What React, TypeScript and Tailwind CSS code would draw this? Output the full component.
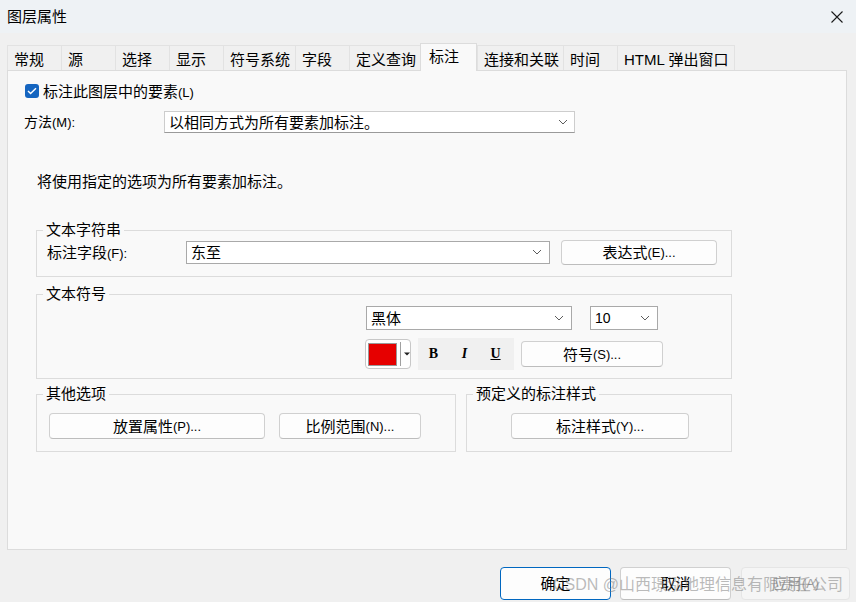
import React from "react";

const tabs = [
  { label: "常规", w: "w-[54px]" },
  { label: "源", w: "w-[54px]" },
  { label: "选择", w: "w-[54px]" },
  { label: "显示", w: "w-[54px]" },
  { label: "符号系统", w: "w-[72px]" },
  { label: "字段", w: "w-[54px]" },
  { label: "定义查询", w: "w-[71px]" },
  { label: "标注", w: "w-[57px]", active: true },
  { label: "连接和关联", w: "w-[86px]" },
  { label: "时间", w: "w-[54px]" },
  { label: "HTML 弹出窗口", w: "w-[118px]" },
];

function Chevron() {
  return (
    <svg width="10" height="6" viewBox="0 0 10 6" className="shrink-0">
      <path d="M1 1l4 4 4-4" fill="none" stroke="#5c5c5c" strokeWidth="1" />
    </svg>
  );
}

function Combo({ text, className }: { text: string; className: string }) {
  return (
    <div
      className={`flex items-center justify-between bg-white border border-[#a9a9a9] pl-[4px] pr-[7px] text-[15px] leading-none ${className}`}
    >
      <span>{text}</span>
      <Chevron />
    </div>
  );
}

function Btn({ text, mn, className }: { text: string; mn?: string; className: string }) {
  return (
    <div
      className={`flex items-center justify-center bg-[#fdfdfd] border border-[#d0d0d0] border-b-[#bdbdbd] rounded-[4px] text-[15px] leading-none ${className}`}
    >
      <span>{text}</span>
      {mn && <span className="text-[13px]">{mn}</span>}
    </div>
  );
}

function Legend({ text }: { text: string }) {
  return <legend className="ml-[6px] px-[3px] text-[15px] leading-[20px]">{text}</legend>;
}

export default function App() {
  return (
    <div className="relative w-[856px] h-[602px] overflow-hidden bg-[#f0f0f0] text-[#000] font-['Liberation_Sans','Noto_Sans_CJK_SC',sans-serif] flex flex-col">
      {/* Title bar */}
      <div className="h-[33px] shrink-0 bg-[#eef2f5] flex items-center justify-between pl-[7px] pr-[13px]">
        <span className="text-[15px] leading-none">图层属性</span>
        <svg width="12" height="12" viewBox="0 0 12 12">
          <path d="M0.5 0.5l11 11M11.5 0.5l-11 11" stroke="#1a1a1a" strokeWidth="1.1" />
        </svg>
      </div>

      {/* Tabs */}
      <div className="h-[37px] shrink-0 flex items-end pl-[7px]">
        {tabs.map((t, i) =>
          t.active ? (
            <div
              key={t.label}
              className={`${t.w} h-[28px] -mb-px relative z-10 bg-[#f9f9f9] border border-b-0 border-[#dcdcdc] pl-[8px] pt-[4px] text-[15px] leading-[18px]`}
            >
              {t.label}
            </div>
          ) : (
            <div
              key={t.label}
              className={`${t.w} h-[25px] bg-[#f0f0f0] border-t border-l border-[#e2e2e2] ${
                i === tabs.length - 1 ? "border-r" : ""
              } pl-[6px] pt-[5px] text-[15px] leading-[18px] whitespace-nowrap`}
            >
              {t.label}
            </div>
          )
        )}
      </div>

      {/* Panel */}
      <div className="ml-[7px] w-[840px] h-[480px] shrink-0 bg-[#f9f9f9] border border-[#dcdcdc] pl-[16px] pt-[10px]">
        <div className="h-[20px] flex items-center">
          <div className="ml-px w-[14px] h-[14px] rounded-[3px] bg-[#1565c0] flex items-center justify-center">
            <svg width="10" height="8" viewBox="0 0 10 8">
              <path d="M1 4l2.6 2.6L9 1.2" fill="none" stroke="#fff" strokeWidth="1.4" />
            </svg>
          </div>
          <span className="ml-[4px] text-[15px] leading-none">
            标注此图层中的要素<span className="text-[13px]">(L)</span>
          </span>
        </div>

        <div className="mt-[10px] h-[22px] flex items-center">
          <span className="w-[140px] text-[14px] leading-none">
            方法<span className="text-[13px]">(M):</span>
          </span>
          <div className="w-[411px] h-[22px] flex items-center justify-between bg-white border border-[#cdcdcd] border-b-[#9a9a9a] pl-[4px] pr-[6px] text-[15px] leading-none">
            <span>以相同方式为所有要素加标注。</span>
            <Chevron />
          </div>
        </div>

        <div className="mt-[39px] ml-[13px] h-[20px] text-[15px] leading-[20px]">将使用指定的选项为所有要素加标注。</div>

        {/* 文本字符串 */}
        <fieldset className="mt-[28px] ml-[12px] w-[696px] border border-[#dcdcdc] pb-[11px]">
          <Legend text="文本字符串" />
          <div className="-mt-px h-[26px] flex items-center pl-[10px]">
            <span className="w-[139px] text-[15px] leading-none">
              标注字段<span className="text-[13px]">(F):</span>
            </span>
            <Combo text="东至" className="w-[364px] h-[23px]" />
            <Btn text="表达式" mn="(E)..." className="ml-[11px] w-[156px] h-[25px]" />
          </div>
        </fieldset>

        {/* 文本符号 */}
        <fieldset className="mt-[7px] ml-[12px] w-[696px] border border-[#dcdcdc] pb-[8px]">
          <Legend text="文本符号" />
          <div className="mt-[2px] h-[24px] flex pl-[329px]">
            <Combo text="黑体" className="w-[206px] h-[24px]" />
            <div className="ml-[18px] w-[68px] h-[24px] flex items-center justify-between bg-white border border-[#a9a9a9] pl-[4px] pr-[7px] text-[14px] leading-none">
              <span>10</span>
              <Chevron />
            </div>
          </div>
          <div className="mt-[8px] h-[32px] flex items-center pl-[328px]">
            <div className="w-[46px] h-[30px] flex items-center bg-white border border-[#c8c8c8] rounded-[4px] pl-[2px]">
              <div className="w-[29px] h-[23px] bg-[#e60000] border border-[#9a9a9a]" />
              <div className="ml-[3px] w-px h-[24px] bg-[#a0a0a0]" />
              <svg width="6" height="4" viewBox="0 0 6 4" className="ml-[3px]">
                <path d="M0 0.5h6L3 3.5z" fill="#222" />
              </svg>
            </div>
            <div className="ml-[7px] w-[96px] h-[32px] bg-[#f0f0f0] flex items-center font-['Liberation_Serif',serif] font-bold text-[14px] leading-none">
              <span className="w-[31px] text-center">B</span>
              <span className="w-[31px] text-center italic">I</span>
              <span className="w-[31px] text-center underline">U</span>
            </div>
            <Btn text="符号" mn="(S)..." className="ml-[7px] w-[142px] h-[26px]" />
          </div>
        </fieldset>

        <div className="mt-[5px] ml-[12px] flex gap-[10px]">
          {/* 其他选项 */}
          <fieldset className="w-[420px] border border-[#dcdcdc] pb-[12px]">
            <Legend text="其他选项" />
            <div className="mt-[9px] h-[26px] flex pl-[12px]">
              <Btn text="放置属性" mn="(P)..." className="w-[216px] h-[26px]" />
              <Btn text="比例范围" mn="(N)..." className="ml-[14px] w-[142px] h-[26px]" />
            </div>
          </fieldset>
          {/* 预定义的标注样式 */}
          <fieldset className="w-[266px] border border-[#dcdcdc] pb-[12px]">
            <Legend text="预定义的标注样式" />
            <div className="mt-[9px] h-[26px] flex pl-[44px]">
              <Btn text="标注样式" mn="(Y)..." className="w-[178px] h-[26px]" />
            </div>
          </fieldset>
        </div>
      </div>

      {/* Dialog buttons */}
      <div className="mt-[17px] flex pl-[500px]">
        <div className="w-[111px] h-[33px] flex items-center justify-center bg-[#fdfdfd] border border-[#0067c0] rounded-[4px] text-[15px] leading-none">
          确定
        </div>
        <div className="ml-[9px] w-[111px] h-[33px] flex items-center justify-center bg-[#fdfdfd] border border-[#d0d0d0] border-b-[#bdbdbd] rounded-[4px] text-[15px] leading-none">
          取消
        </div>
        <div className="ml-[10px] w-[109px] h-[33px] flex items-center justify-center bg-[#f5f5f5] border border-[#e5e5e5] rounded-[4px] text-[15px] leading-none text-[#a0a0a0]">
          应用<span className="text-[13px]">(A)</span>
        </div>
      </div>

      {/* Watermark */}
      <div className="absolute left-[553px] top-[575px] whitespace-nowrap text-[16px] leading-[20px] text-[rgba(120,120,120,0.5)]">
        CSDN @山西璟泓地理信息有限责任公司
      </div>
    </div>
  );
}
